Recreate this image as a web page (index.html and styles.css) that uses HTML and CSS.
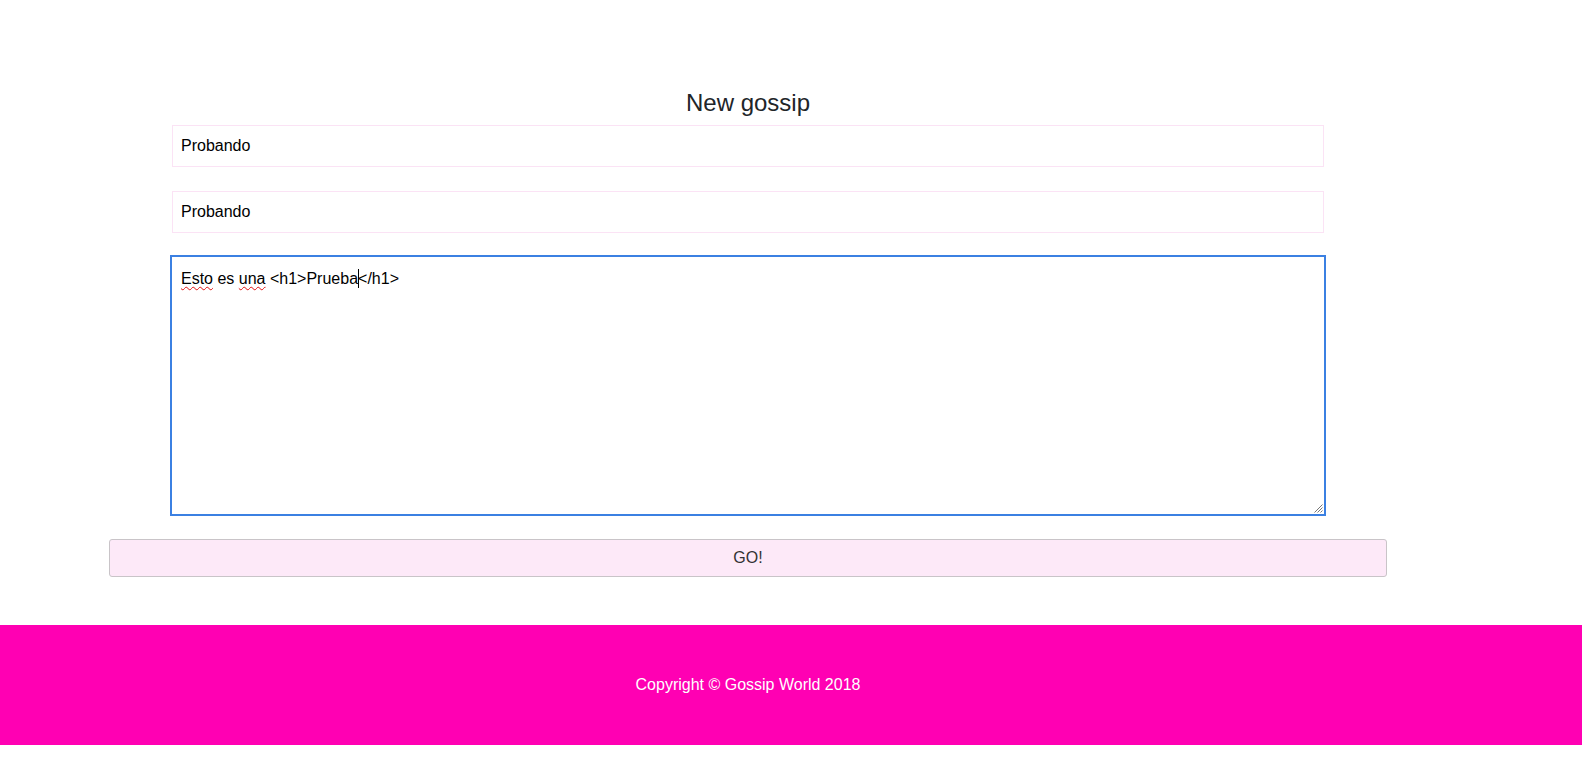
FILE: index.html
```html
<!DOCTYPE html>
<html lang="en">
<head>
<meta charset="utf-8">
<title>New gossip</title>
<link rel="stylesheet" href="styles.css">
</head>
<body>
<main class="page">
  <h4 class="title">New gossip</h4>
  <form class="gossip-form">
    <input class="field field-first" type="text" value="Probando">
    <input class="field field-second" type="text" value="Probando">
    <div class="editor"><p class="editor-text"><span class="misspelled">Esto</span> es <span class="misspelled">una</span> &lt;h1&gt;Prueba<span class="caret"></span>&lt;/h1&gt;</p><svg class="grip" width="10" height="10" viewBox="0 0 10 10"><path d="M9.5 1.5 L1.5 9.5 M9.5 4.5 L4.5 9.5 M9.5 7.5 L7.5 9.5" stroke="#777777" stroke-width="1" fill="none"/></svg></div>
  </form>
  <button class="go" type="button">GO!</button>
</main>
<footer class="footer">
  <div class="footer-inner">Copyright © Gossip World 2018</div>
</footer>
</body>
</html>
```

FILE: styles.css
```css
html, body {
  margin: 0;
  padding: 0;
  background: #ffffff;
}

body {
  font-family: "Liberation Sans", Arial, sans-serif;
  font-size: 16px;
  line-height: 24px;
  color: #212529;
}

.page {
  width: 1496px;
  padding-top: 88px;
  padding-bottom: 48px;
}

.title {
  margin: 0 0 8px;
  font-size: 24px;
  line-height: 29px;
  font-weight: 400;
  text-align: center;
  color: #212529;
}

.gossip-form {
  display: flex;
  flex-direction: column;
  padding: 0 170px;
}

.field {
  box-sizing: border-box;
  display: block;
  width: 1152px;
  height: 42px;
  margin: 0 2px;
  padding: 0 8px;
  border: 1px solid #fbe3f5;
  border-radius: 0;
  font-family: "Liberation Sans", Arial, sans-serif;
  font-size: 16px;
  color: #000000;
  background: #ffffff;
  outline: none;
}

.field-first {
  margin-bottom: 24px;
}

.field-second {
  margin-bottom: 22px;
}

.editor {
  position: relative;
  box-sizing: border-box;
  width: 1156px;
  height: 261px;
  padding: 10px 9px 8px;
  border: 2px solid #3b80e2;
  color: #000000;
}

.editor-text {
  margin: 0;
  font-size: 16px;
  line-height: 24px;
}

.misspelled {
  text-decoration: underline wavy #e01010;
  text-decoration-thickness: 1px;
  text-underline-offset: 2px;
  text-decoration-skip-ink: none;
}

.caret {
  display: inline-block;
  width: 1px;
  height: 19px;
  margin-right: -1px;
  background: #000000;
  vertical-align: -4px;
}

.grip {
  position: absolute;
  right: 1px;
  bottom: 1px;
}

.go {
  display: block;
  box-sizing: border-box;
  width: 1278px;
  height: 38px;
  margin: 23px 109px 0;
  padding: 0;
  border: 1px solid #c9c4c8;
  border-radius: 3px;
  background: #fde9f8;
  font-family: "Liberation Sans", Arial, sans-serif;
  font-size: 16px;
  color: #333333;
  text-align: center;
}

.footer {
  background: #ff00b3;
  padding: 48px 0;
}

.footer-inner {
  width: 1496px;
  text-align: center;
  color: #ffffff;
  font-size: 16px;
  line-height: 24px;
}
```
